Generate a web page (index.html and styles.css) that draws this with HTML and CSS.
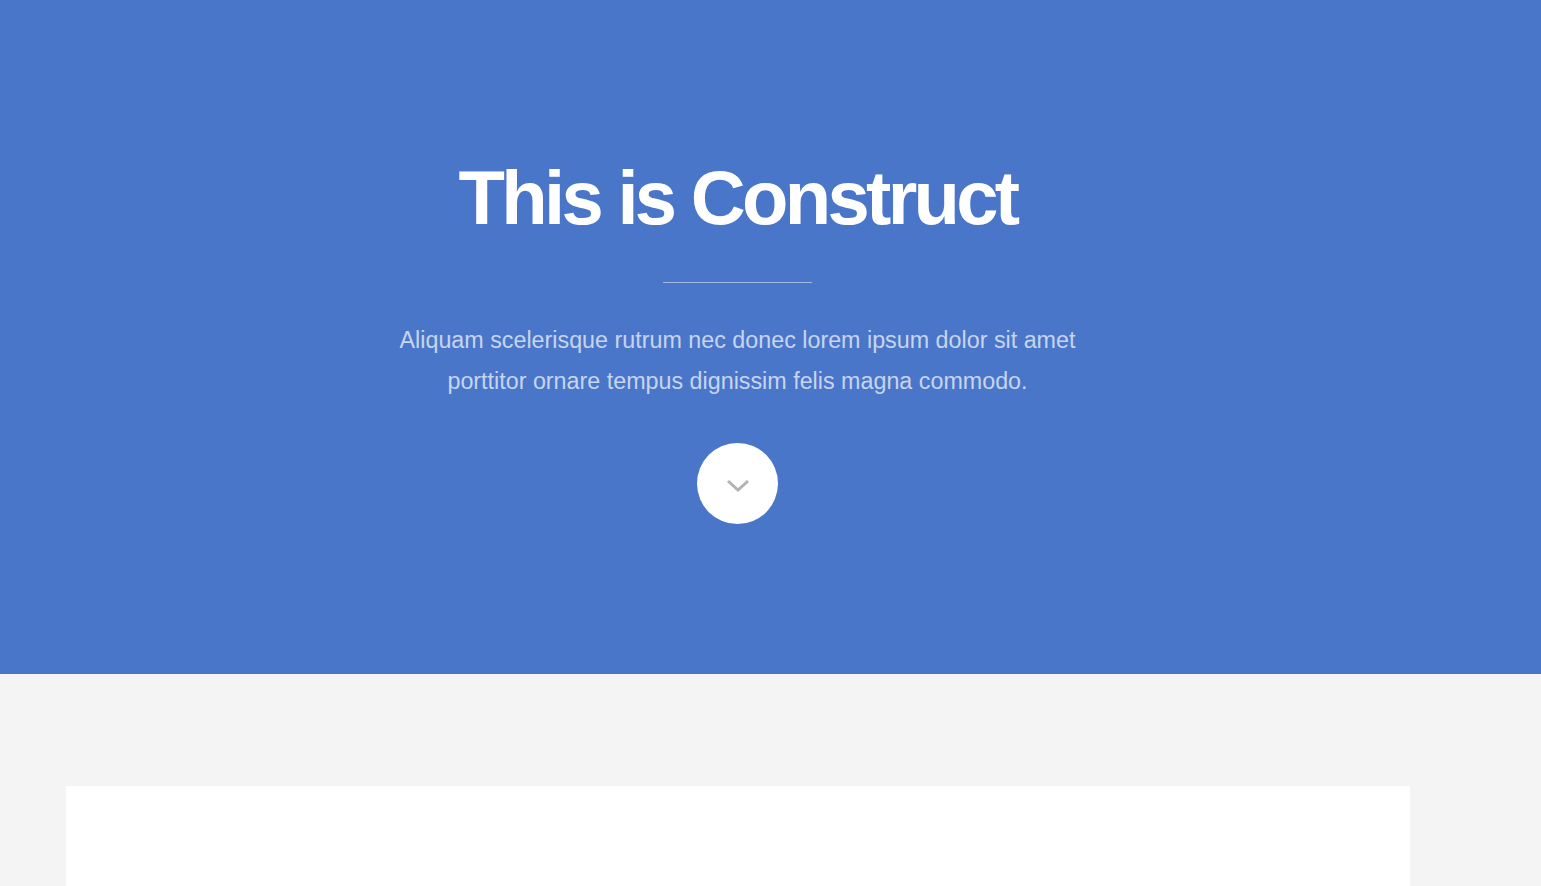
FILE: index.html
```html
<!DOCTYPE html>
<html lang="en">
<head>
<meta charset="utf-8">
<title>Construct</title>
<link rel="stylesheet" href="styles.css">
</head>
<body>
<section class="banner">
  <div class="inner">
    <h1 class="title">This is Construct</h1>
    <hr class="rule">
    <p class="lead">Aliquam scelerisque rutrum nec donec lorem ipsum dolor sit amet<br>porttitor ornare tempus dignissim felis magna commodo.</p>
    <a class="more" href="#main" aria-label="More">
      <svg width="24" height="14" viewBox="0 0 24 14"><path d="M2 2 L12 11 L22 2" fill="none" stroke="#b3b3b3" stroke-width="3"/></svg>
    </a>
  </div>
</section>
<section class="main" id="main">
  <div class="wrap">
    <div class="card"></div>
  </div>
</section>
</body>
</html>
```
FILE: styles.css
```css
html, body { margin: 0; padding: 0; }
body {
  background: #f4f4f4;
  font-family: "Liberation Sans", Arial, sans-serif;
  overflow: hidden;
}
.banner {
  background: #4a76ca;
  height: 674px;
  box-sizing: border-box;
  padding-right: 66px;
}
.inner {
  display: flex;
  flex-direction: column;
  align-items: center;
  padding-top: 152px;
}
.title {
  margin: 0;
  color: #fff;
  font-weight: 700;
  font-size: 76px;
  letter-spacing: -3.7px;
  line-height: 92px;
}
.rule {
  width: 149px;
  height: 1px;
  border: 0;
  background: rgba(255,255,255,0.5);
  margin: 38px 0 0;
}
.lead {
  margin: 37px 0 0;
  color: rgba(255,255,255,0.7);
  font-size: 23.3px;
  line-height: 41px;
  text-align: center;
}
.more {
  margin-top: 41px;
  width: 81px;
  height: 81px;
  border-radius: 50%;
  background: #fff;
  display: flex;
  align-items: center;
  justify-content: center;
}
.more svg { margin-top: 4px; }
.main {
  padding: 112px 66px 0 0;
}
.wrap {
  padding: 0 65px 0 66px;
}
.card {
  background: #fff;
  height: 100px;
}
```
